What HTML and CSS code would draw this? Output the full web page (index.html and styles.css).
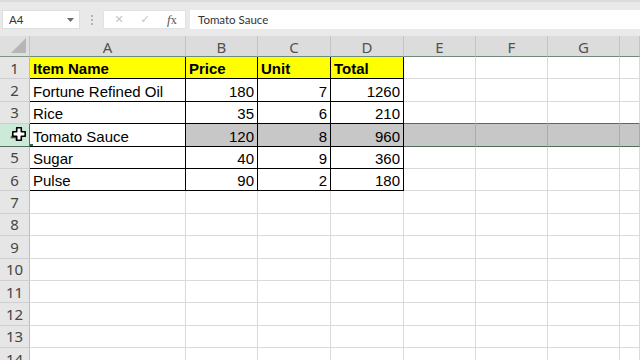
FILE: index.html
```html
<!DOCTYPE html>
<html lang="en">
<head>
  <meta charset="UTF-8">
  <title>Book1 - Excel</title>
  <link rel="stylesheet" href="styles.css">
</head>
<body>

<div class="formula-bar">
  <div class="name-box">
    <span>A4</span>
    <svg class="drop" width="7" height="4" viewBox="0 0 7 4"><path d="M0 0h7L3.5 4z" fill="#6b6b6b"/></svg>
  </div>
  <div class="grip"><i></i><i></i><i></i></div>
  <div class="fx-box">
    <span class="btn">✕</span>
    <span class="btn">✓</span>
    <span class="fx"><em>f</em>x</span>
  </div>
  <div class="formula">Tomato Sauce</div>
</div>

<div class="sheet">
  <div class="corner"><span class="tri"></span></div>
  <div class="ch">A</div><div class="ch">B</div><div class="ch">C</div><div class="ch">D</div>
  <div class="ch">E</div><div class="ch">F</div><div class="ch">G</div><div class="ch"></div>

  <div class="rh">1</div>
  <div class="c d y">Item Name</div><div class="c d y">Price</div><div class="c d y">Unit</div><div class="c d y">Total</div>
  <div class="c"></div><div class="c"></div><div class="c"></div><div class="c"></div>

  <div class="rh">2</div>
  <div class="c d">Fortune Refined Oil</div><div class="c d n">180</div><div class="c d n">7</div><div class="c d n">1260</div>
  <div class="c"></div><div class="c"></div><div class="c"></div><div class="c"></div>

  <div class="rh">3</div>
  <div class="c d">Rice</div><div class="c d n">35</div><div class="c d n">6</div><div class="c d n">210</div>
  <div class="c g"></div><div class="c g"></div><div class="c g"></div><div class="c g"></div>

  <div class="rh on">
    4
    <svg class="cursor" width="14" height="14" viewBox="0 0 14 14"><path d="M4.7 0.8h4.6v3.9h3.9v4.6h-3.9v3.9h-4.6v-3.9h-3.9v-4.6h3.9z" fill="#fff" stroke="#000" stroke-width="1.6" stroke-linejoin="round"/></svg>
  </div>
  <div class="c d active">Tomato Sauce<span class="handle"></span></div><div class="c d n s">120</div><div class="c d n s">8</div><div class="c d n s">960</div>
  <div class="c s g"></div><div class="c s g"></div><div class="c s g"></div><div class="c s g"></div>

  <div class="rh">5</div>
  <div class="c d">Sugar</div><div class="c d n">40</div><div class="c d n">9</div><div class="c d n">360</div>
  <div class="c"></div><div class="c"></div><div class="c"></div><div class="c"></div>

  <div class="rh">6</div>
  <div class="c d">Pulse</div><div class="c d n">90</div><div class="c d n">2</div><div class="c d n">180</div>
  <div class="c"></div><div class="c"></div><div class="c"></div><div class="c"></div>

  <div class="rh">7</div><div class="c"></div><div class="c"></div><div class="c"></div><div class="c"></div><div class="c"></div><div class="c"></div><div class="c"></div><div class="c"></div>
  <div class="rh">8</div><div class="c"></div><div class="c"></div><div class="c"></div><div class="c"></div><div class="c"></div><div class="c"></div><div class="c"></div><div class="c"></div>
  <div class="rh">9</div><div class="c"></div><div class="c"></div><div class="c"></div><div class="c"></div><div class="c"></div><div class="c"></div><div class="c"></div><div class="c"></div>
  <div class="rh">10</div><div class="c"></div><div class="c"></div><div class="c"></div><div class="c"></div><div class="c"></div><div class="c"></div><div class="c"></div><div class="c"></div>
  <div class="rh">11</div><div class="c"></div><div class="c"></div><div class="c"></div><div class="c"></div><div class="c"></div><div class="c"></div><div class="c"></div><div class="c"></div>
  <div class="rh">12</div><div class="c"></div><div class="c"></div><div class="c"></div><div class="c"></div><div class="c"></div><div class="c"></div><div class="c"></div><div class="c"></div>
  <div class="rh">13</div><div class="c"></div><div class="c"></div><div class="c"></div><div class="c"></div><div class="c"></div><div class="c"></div><div class="c"></div><div class="c"></div>
  <div class="rh">14</div><div class="c"></div><div class="c"></div><div class="c"></div><div class="c"></div><div class="c"></div><div class="c"></div><div class="c"></div><div class="c"></div>
</div>

</body>
</html>
```

FILE: styles.css
```css
body {
  margin: 0;
  background: #fff;
  font-family: "Liberation Sans", Arial, sans-serif;
  overflow: hidden;
  height: 360px;
}

/* formula bar */
.formula-bar {
  height: 36px;
  box-sizing: border-box;
  background: #e9e9e9;
  border-top: 2px solid #dcdcdc;
  padding: 8px 0 0 2px;
  display: flex;
  align-items: flex-start;
}

.name-box {
  width: 78px;
  height: 19px;
  box-sizing: border-box;
  background: #fff;
  border: 1px solid #dedede;
  display: flex;
  align-items: center;
  justify-content: space-between;
  padding: 0 5px 0 6px;
  font-family: Lato, "Liberation Sans", sans-serif;
  font-size: 11.5px;
  color: #333;
}

.grip {
  width: 23px;
  height: 19px;
  display: flex;
  flex-direction: column;
  align-items: center;
  justify-content: center;
  gap: 2px;
}

.grip i {
  width: 2px;
  height: 2px;
  background: #b5b5b5;
}

.fx-box {
  width: 83px;
  height: 19px;
  box-sizing: border-box;
  background: #fff;
  border: 1px solid #e2e2e2;
  display: flex;
  align-items: center;
  padding: 0 0 0 9px;
  gap: 14px;
}

.btn {
  color: #c4c4c4;
  font-family: "DejaVu Sans", sans-serif;
  font-size: 11px;
  width: 12px;
  text-align: center;
}

.fx {
  color: #555;
  font-family: "Liberation Serif", serif;
  font-size: 12px;
  margin-left: 2px;
}

.fx em {
  font-size: 13px;
}

.formula {
  flex: 1;
  margin-left: 4px;
  height: 19px;
  box-sizing: border-box;
  background: #fff;
  padding: 0 8px;
  display: flex;
  align-items: center;
  font-family: Lato, "Liberation Sans", sans-serif;
  font-size: 11.5px;
  color: #333;
}

/* sheet grid */
.sheet {
  display: grid;
  grid-template-columns: 30px 156px 72px 73px 73px 72px 72px 72px 1fr;
  grid-template-rows: 21px;
  grid-auto-rows: 22.4px;
}

.sheet > div {
  box-sizing: border-box;
  min-width: 0;
  overflow: hidden;
}

.corner {
  background: #dfdfdf;
  border-right: 1px solid #c4c4c4;
  border-bottom: 1px solid #7d9484;
  display: flex;
  align-items: flex-end;
  justify-content: flex-end;
  padding: 0 3px 3px 0;
}

.tri {
  width: 0;
  height: 0;
  border-left: 15px solid transparent;
  border-bottom: 15px solid #b6b6b6;
}

.ch {
  background: #dcdcdc;
  border-right: 1px solid #c4c4c4;
  border-bottom: 1px solid #6f8a78;
  display: flex;
  align-items: center;
  justify-content: center;
  font-family: "Noto Sans", sans-serif;
  font-size: 15px;
  color: #525252;
  padding-top: 1px;
}

.rh {
  background: #e6e6e6;
  border-right: 1px solid #bdbdbd;
  border-bottom: 1px solid #cfcfcf;
  display: flex;
  align-items: center;
  justify-content: center;
  font-family: "Noto Sans", sans-serif;
  font-size: 15px;
  color: #454545;
}

.rh.on {
  position: relative;
  background: #cde9d8;
  color: #1f6b41;
  border-right-color: #3f7a57;
  border-bottom-color: #4f6f5c;
}

.cursor {
  position: absolute;
  left: 12px;
  top: 3px;
}

.c {
  border-right: 1px solid #dadada;
  border-bottom: 1px solid #dadada;
  padding: 0 3px 1px;
  display: flex;
  align-items: flex-end;
  font-size: 15px;
  line-height: 17px;
  color: #000;
  white-space: nowrap;
}

.c.n {
  justify-content: flex-end;
}

.c.d {
  border-right-color: #000;
  border-bottom-color: #000;
}

.c.y {
  background: #ffff00;
  font-weight: bold;
}

.c.g {
  border-bottom-color: #4f6f5c;
}

.c.s {
  background: #c7c7c7;
}

.c.s.g {
  border-right-color: #ababab;
}

.c.active {
  position: relative;
  background: #fff;
}

.handle {
  position: absolute;
  left: 0;
  bottom: -1px;
  width: 3px;
  height: 3px;
  background: #217346;
}
```
